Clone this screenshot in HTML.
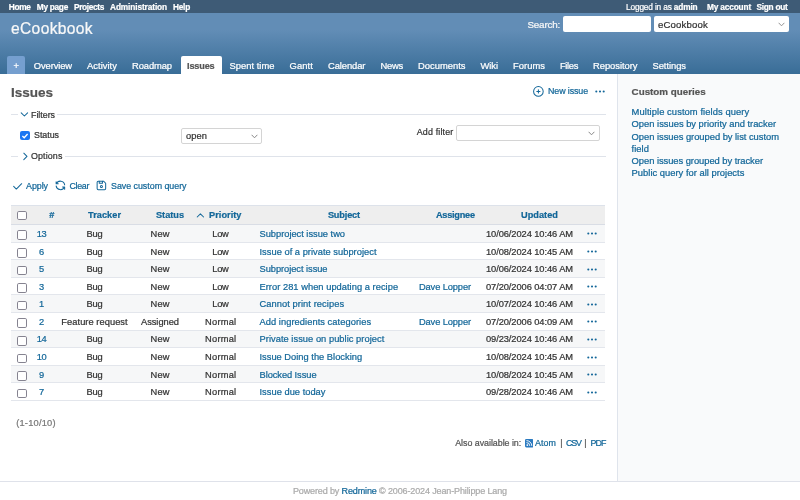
<!DOCTYPE html>
<html><head><meta charset="utf-8"><title>Issues - eCookbook - Redmine</title>
<style>
html,body{margin:0;padding:0;background:#fff;}
body{width:800px;height:500px;position:relative;overflow:hidden;font-family:"Liberation Sans",sans-serif;}
.t{position:absolute;white-space:nowrap;font-family:"Liberation Sans",sans-serif;-webkit-text-stroke:0.22px currentColor;}
b{font-weight:bold}
#w{position:absolute;left:0;top:0;width:800px;height:500px;will-change:transform;filter:blur(0.35px);}
</style></head><body>
<div id="w">
<div style="position:absolute;left:-10px;top:-10px;width:820px;height:23px;background:#3e5b76"></div>
<span class="t" style="left:8.75px;top:1px;font-size:8.3px;line-height:12px;font-weight:bold;color:#fff;letter-spacing:-0.328px;">Home</span>
<span class="t" style="left:36.75px;top:1px;font-size:8.3px;line-height:12px;font-weight:bold;color:#fff;letter-spacing:-0.279px;">My page</span>
<span class="t" style="left:74.00px;top:1px;font-size:8.3px;line-height:12px;font-weight:bold;color:#fff;letter-spacing:-0.344px;">Projects</span>
<span class="t" style="left:110.00px;top:1px;font-size:8.3px;line-height:12px;font-weight:bold;color:#fff;letter-spacing:-0.110px;">Administration</span>
<span class="t" style="left:173.00px;top:1px;font-size:8.3px;line-height:12px;font-weight:bold;color:#fff;letter-spacing:-0.246px;">Help</span>
<span class="t" style="left:626.00px;top:1px;font-size:8.3px;line-height:12px;font-weight:normal;color:#fff;letter-spacing:-0.154px;">Logged in as <b>admin</b></span>
<span class="t" style="left:707.00px;top:1px;font-size:8.3px;line-height:12px;font-weight:bold;color:#fff;letter-spacing:-0.166px;">My account</span>
<span class="t" style="left:756.50px;top:1px;font-size:8.3px;line-height:12px;font-weight:bold;color:#fff;letter-spacing:-0.273px;">Sign out</span>
<div style="position:absolute;left:-10px;top:13px;width:820px;height:61px;background:linear-gradient(#628db6 0%,#628db6 28%,#396d97 100%)"></div>
<span class="t" style="left:11.00px;top:19px;font-size:15.6px;line-height:19px;font-weight:normal;color:#f8f8f8;letter-spacing:0.345px;">eCookbook</span>
<span class="t" style="left:527.50px;top:18px;font-size:9.8px;line-height:13px;font-weight:normal;color:#f8f8f8;letter-spacing:-0.181px;">Search:</span>
<div style="position:absolute;left:562.5px;top:16px;width:88.5px;height:16px;background:#fff;border-radius:2px"></div>
<div style="position:absolute;left:653.5px;top:16px;width:135.5px;height:16px;background:#fff;border-radius:2px"></div>
<span class="t" style="left:658.00px;top:18px;font-size:9.6px;line-height:13px;font-weight:normal;color:#333;letter-spacing:0.161px;">eCookbook</span>
<svg style="position:absolute;left:778px;top:21.5px" width="7" height="5" viewBox="0 0 7 5"><path d="M0.6 0.8 L3.5 3.8 L6.4 0.8" fill="none" stroke="#888" stroke-width="0.9"/></svg>
<div style="position:absolute;left:7px;top:56px;width:18.4px;height:18px;background:#759fcf;border-radius:2px 2px 0 0"></div>
<span class="t" style="left:16.20px;transform:translateX(-50%);top:59px;font-size:9.4px;line-height:13px;font-weight:normal;color:#fff;">+</span>
<div style="position:absolute;left:180.5px;top:56px;width:41px;height:18px;background:#fff;border-radius:2px 2px 0 0"></div>
<span class="t" style="left:33.75px;top:59px;font-size:9.4px;line-height:13px;font-weight:normal;color:#fff;letter-spacing:-0.104px;">Overview</span>
<span class="t" style="left:87.00px;top:59px;font-size:9.4px;line-height:13px;font-weight:normal;color:#fff;letter-spacing:0.037px;">Activity</span>
<span class="t" style="left:132.00px;top:59px;font-size:9.4px;line-height:13px;font-weight:normal;color:#fff;letter-spacing:-0.094px;">Roadmap</span>
<span class="t" style="left:229.50px;top:59px;font-size:9.4px;line-height:13px;font-weight:normal;color:#fff;letter-spacing:0.017px;">Spent time</span>
<span class="t" style="left:289.50px;top:59px;font-size:9.4px;line-height:13px;font-weight:normal;color:#fff;letter-spacing:0.113px;">Gantt</span>
<span class="t" style="left:328.00px;top:59px;font-size:9.4px;line-height:13px;font-weight:normal;color:#fff;letter-spacing:-0.093px;">Calendar</span>
<span class="t" style="left:380.50px;top:59px;font-size:9.4px;line-height:13px;font-weight:normal;color:#fff;letter-spacing:-0.238px;">News</span>
<span class="t" style="left:418.00px;top:59px;font-size:9.4px;line-height:13px;font-weight:normal;color:#fff;letter-spacing:0.009px;">Documents</span>
<span class="t" style="left:480.50px;top:59px;font-size:9.4px;line-height:13px;font-weight:normal;color:#fff;letter-spacing:-0.051px;">Wiki</span>
<span class="t" style="left:513.00px;top:59px;font-size:9.4px;line-height:13px;font-weight:normal;color:#fff;letter-spacing:0.036px;">Forums</span>
<span class="t" style="left:560.00px;top:59px;font-size:9.4px;line-height:13px;font-weight:normal;color:#fff;letter-spacing:-0.359px;">Files</span>
<span class="t" style="left:593.00px;top:59px;font-size:9.4px;line-height:13px;font-weight:normal;color:#fff;letter-spacing:-0.031px;">Repository</span>
<span class="t" style="left:652.50px;top:59px;font-size:9.4px;line-height:13px;font-weight:normal;color:#fff;letter-spacing:-0.047px;">Settings</span>
<span class="t" style="left:187.00px;top:60px;font-size:9.1px;line-height:12px;font-weight:bold;color:#555;letter-spacing:-0.135px;">Issues</span>
<div style="position:absolute;left:617px;top:74px;width:193px;height:407.5px;background:#f9fafb;border-left:1px solid #dfe4ec;box-sizing:border-box"></div>
<span class="t" style="left:631.60px;top:85px;font-size:9.8px;line-height:13px;font-weight:bold;color:#555;letter-spacing:-0.003px;">Custom queries</span>
<span class="t" style="left:631.60px;top:105px;font-size:9.4px;line-height:13px;font-weight:normal;color:#136799;letter-spacing:0.068px;">Multiple custom fields query</span>
<span class="t" style="left:631.60px;top:117px;font-size:9.4px;line-height:13px;font-weight:normal;color:#136799;letter-spacing:-0.013px;">Open issues by priority and tracker</span>
<span class="t" style="left:631.60px;top:130px;font-size:9.4px;line-height:13px;font-weight:normal;color:#136799;letter-spacing:-0.033px;">Open issues grouped by list custom</span>
<span class="t" style="left:631.60px;top:142px;font-size:9.4px;line-height:13px;font-weight:normal;color:#136799;letter-spacing:0.019px;">field</span>
<span class="t" style="left:631.60px;top:154px;font-size:9.4px;line-height:13px;font-weight:normal;color:#136799;letter-spacing:-0.050px;">Open issues grouped by tracker</span>
<span class="t" style="left:631.60px;top:166px;font-size:9.4px;line-height:13px;font-weight:normal;color:#136799;letter-spacing:0.008px;">Public query for all projects</span>
<span class="t" style="left:11.00px;top:84px;font-size:13.5px;line-height:17px;font-weight:bold;color:#555;letter-spacing:-0.005px;">Issues</span>
<svg style="position:absolute;left:532.30px;top:84.60px" width="12.8" height="12.8" viewBox="0 0 24 24" fill="none" stroke="#136799" stroke-width="1.9" stroke-linecap="round" stroke-linejoin="round"><path d="M3 12a9 9 0 1 0 18 0a9 9 0 0 0 -18 0"/><path d="M9 12h6"/><path d="M12 9v6"/></svg>
<span class="t" style="left:548.00px;top:85px;font-size:8.9px;line-height:12px;font-weight:normal;color:#136799;letter-spacing:-0.106px;">New issue</span>
<svg style="position:absolute;left:595.30px;top:89.50px" width="10" height="3" viewBox="0 0 10 3"><circle cx="1.3" cy="1.5" r="1.05" fill="#136799"/><circle cx="5" cy="1.5" r="1.05" fill="#136799"/><circle cx="8.7" cy="1.5" r="1.05" fill="#136799"/></svg>
<div style="position:absolute;left:11px;top:114px;width:6.5px;height:1px;background:#dfe3ea"></div>
<div style="position:absolute;left:57px;top:114px;width:549px;height:1px;background:#dfe3ea"></div>
<svg style="position:absolute;left:18.30px;top:108.20px" width="12.8" height="12.8" viewBox="0 0 24 24" fill="none" stroke="#136799" stroke-width="1.9" stroke-linecap="round" stroke-linejoin="round"><path d="M6 9l6 6l6 -6"/></svg>
<span class="t" style="left:31.00px;top:109px;font-size:8.9px;line-height:12px;font-weight:normal;color:#333;letter-spacing:-0.025px;">Filters</span>
<div style="position:absolute;left:19.8px;top:130.8px;width:10px;height:9.7px;background:#1a76f2;border-radius:2px"></div>
<svg style="position:absolute;left:19.8px;top:130.8px" width="10" height="9.7" viewBox="0 0 10 9.7"><path d="M2.4 5 L4.2 6.8 L7.6 3" fill="none" stroke="#fff" stroke-width="1.3"/></svg>
<span class="t" style="left:34.00px;top:129px;font-size:8.9px;line-height:12px;font-weight:normal;color:#333;letter-spacing:-0.029px;">Status</span>
<div style="position:absolute;left:180.5px;top:127.5px;width:81.5px;height:16px;background:#fff;border:1px solid #d4d4d4;border-radius:2px;box-sizing:border-box"></div>
<span class="t" style="left:186.00px;top:130px;font-size:9.3px;line-height:12px;font-weight:normal;color:#333;letter-spacing:0.078px;">open</span>
<svg style="position:absolute;left:250.5px;top:133.6px" width="7" height="5" viewBox="0 0 7 5"><path d="M0.6 0.8 L3.5 3.8 L6.4 0.8" fill="none" stroke="#888" stroke-width="1"/></svg>
<span class="t" style="left:416.75px;top:126px;font-size:8.9px;line-height:12px;font-weight:normal;color:#333;letter-spacing:0.172px;">Add filter</span>
<div style="position:absolute;left:456px;top:124.5px;width:143.5px;height:16px;background:#fff;border:1px solid #d4d4d4;border-radius:2px;box-sizing:border-box"></div>
<svg style="position:absolute;left:587.7px;top:130.6px" width="7" height="5" viewBox="0 0 7 5"><path d="M0.6 0.8 L3.5 3.8 L6.4 0.8" fill="none" stroke="#888" stroke-width="1"/></svg>
<div style="position:absolute;left:11px;top:155.5px;width:6.5px;height:1px;background:#dfe3ea"></div>
<div style="position:absolute;left:64.5px;top:155.5px;width:541.5px;height:1px;background:#dfe3ea"></div>
<svg style="position:absolute;left:18.50px;top:149.70px" width="12.8" height="12.8" viewBox="0 0 24 24" fill="none" stroke="#136799" stroke-width="1.9" stroke-linecap="round" stroke-linejoin="round"><path d="M9 6l6 6l-6 6"/></svg>
<span class="t" style="left:31.00px;top:150px;font-size:8.9px;line-height:12px;font-weight:normal;color:#333;letter-spacing:0.129px;">Options</span>
<svg style="position:absolute;left:10.73px;top:179.50px" width="12.8" height="12.8" viewBox="0 0 24 24" fill="none" stroke="#136799" stroke-width="1.9" stroke-linecap="round" stroke-linejoin="round"><path d="M5 12l5 5l10 -10"/></svg>
<span class="t" style="left:26.00px;top:180px;font-size:8.9px;line-height:12px;font-weight:normal;color:#136799;letter-spacing:-0.041px;">Apply</span>
<svg style="position:absolute;left:53.90px;top:179.35px" width="12.8" height="12.8" viewBox="0 0 24 24" fill="none" stroke="#136799" stroke-width="1.9" stroke-linecap="round" stroke-linejoin="round"><path d="M20 11a8.1 8.1 0 0 0 -15.5 -2m-.5 -4v4h4"/><path d="M4 13a8.1 8.1 0 0 0 15.5 2m.5 4v-4h-4"/></svg>
<span class="t" style="left:69.50px;top:180px;font-size:8.9px;line-height:12px;font-weight:normal;color:#136799;letter-spacing:-0.344px;">Clear</span>
<svg style="position:absolute;left:95.20px;top:179.40px" width="12.8" height="12.8" viewBox="0 0 24 24" fill="none" stroke="#136799" stroke-width="1.9" stroke-linecap="round" stroke-linejoin="round"><path d="M6 4h10l4 4v10a2 2 0 0 1 -2 2h-12a2 2 0 0 1 -2 -2v-12a2 2 0 0 1 2 -2"/><path d="M12 14m-2 0a2 2 0 1 0 4 0a2 2 0 1 0 -4 0"/><path d="M14 4l0 4l-6 0l0 -4"/></svg>
<span class="t" style="left:111.00px;top:180px;font-size:8.9px;line-height:12px;font-weight:normal;color:#136799;letter-spacing:-0.028px;">Save custom query</span>
<div style="position:absolute;left:11px;top:204.5px;width:594px;height:20.5px;background:#eee;border-bottom:1px solid #d9dde5;border-top:1px solid #dde2ea;box-sizing:border-box"></div>
<div style="position:absolute;left:17px;top:210.8px;width:9.5px;height:9.5px;background:#fff;border:1px solid #858390;border-radius:1.8px;box-sizing:border-box"></div>
<span class="t" style="left:51.75px;transform:translateX(-50%);top:209px;font-size:9.2px;line-height:12px;font-weight:bold;color:#136799;">#</span>
<span class="t" style="left:104.52px;transform:translateX(-50%);top:209px;font-size:9.2px;line-height:12px;font-weight:bold;color:#136799;letter-spacing:0.042px;">Tracker</span>
<span class="t" style="left:169.99px;transform:translateX(-50%);top:209px;font-size:9.2px;line-height:12px;font-weight:bold;color:#136799;letter-spacing:-0.016px;">Status</span>
<svg style="position:absolute;left:193.60px;top:208.80px" width="12.8" height="12.8" viewBox="0 0 24 24" fill="none" stroke="#136799" stroke-width="1.9" stroke-linecap="round" stroke-linejoin="round"><path d="M6 15l6 -6l6 6"/></svg>
<span class="t" style="left:209.00px;top:209px;font-size:9.2px;line-height:12px;font-weight:bold;color:#136799;letter-spacing:0.041px;">Priority</span>
<span class="t" style="left:343.92px;transform:translateX(-50%);top:209px;font-size:9.2px;line-height:12px;font-weight:bold;color:#136799;letter-spacing:-0.170px;">Subject</span>
<span class="t" style="left:455.38px;transform:translateX(-50%);top:209px;font-size:9.2px;line-height:12px;font-weight:bold;color:#136799;letter-spacing:-0.232px;">Assignee</span>
<span class="t" style="left:539.52px;transform:translateX(-50%);top:209px;font-size:9.2px;line-height:12px;font-weight:bold;color:#136799;letter-spacing:0.036px;">Updated</span>
<div style="position:absolute;left:11px;top:225px;width:594px;height:18px;background:#f6f7f8;border-bottom:1px solid #e3e6ec;box-sizing:border-box"></div>
<div style="position:absolute;left:17px;top:230.4px;width:9.5px;height:9.5px;background:#fff;border:1px solid #858390;border-radius:1.8px;box-sizing:border-box"></div>
<span class="t" style="left:41.49px;transform:translateX(-50%);top:228px;font-size:9.3px;line-height:12px;font-weight:normal;color:#136799;letter-spacing:-0.422px;">13</span>
<span class="t" style="left:94.41px;transform:translateX(-50%);top:228px;font-size:9.3px;line-height:12px;font-weight:normal;color:#333;letter-spacing:-0.182px;">Bug</span>
<span class="t" style="left:160.07px;transform:translateX(-50%);top:228px;font-size:9.3px;line-height:12px;font-weight:normal;color:#333;letter-spacing:0.130px;">New</span>
<span class="t" style="left:220.46px;transform:translateX(-50%);top:228px;font-size:9.3px;line-height:12px;font-weight:normal;color:#333;letter-spacing:-0.288px;">Low</span>
<span class="t" style="left:259.50px;top:228px;font-size:9.3px;line-height:12px;font-weight:normal;color:#136799;letter-spacing:-0.015px;">Subproject issue two</span>
<span class="t" style="left:529.46px;transform:translateX(-50%);top:228px;font-size:9.3px;line-height:12px;font-weight:normal;color:#333;letter-spacing:-0.074px;">10/06/2024 10:46 AM</span>
<svg style="position:absolute;left:587.40px;top:232.40px" width="10" height="3" viewBox="0 0 10 3"><circle cx="1.3" cy="1.5" r="1.05" fill="#136799"/><circle cx="5" cy="1.5" r="1.05" fill="#136799"/><circle cx="8.7" cy="1.5" r="1.05" fill="#136799"/></svg>
<div style="position:absolute;left:11px;top:243px;width:594px;height:17px;background:#fff;border-bottom:1px solid #e3e6ec;box-sizing:border-box"></div>
<div style="position:absolute;left:17px;top:248.0px;width:9.5px;height:9.5px;background:#fff;border:1px solid #858390;border-radius:1.8px;box-sizing:border-box"></div>
<span class="t" style="left:41.70px;transform:translateX(-50%);top:246px;font-size:9.3px;line-height:12px;font-weight:normal;color:#136799;">6</span>
<span class="t" style="left:94.41px;transform:translateX(-50%);top:246px;font-size:9.3px;line-height:12px;font-weight:normal;color:#333;letter-spacing:-0.182px;">Bug</span>
<span class="t" style="left:160.07px;transform:translateX(-50%);top:246px;font-size:9.3px;line-height:12px;font-weight:normal;color:#333;letter-spacing:0.130px;">New</span>
<span class="t" style="left:220.46px;transform:translateX(-50%);top:246px;font-size:9.3px;line-height:12px;font-weight:normal;color:#333;letter-spacing:-0.288px;">Low</span>
<span class="t" style="left:259.50px;top:246px;font-size:9.3px;line-height:12px;font-weight:normal;color:#136799;letter-spacing:0.025px;">Issue of a private subproject</span>
<span class="t" style="left:529.46px;transform:translateX(-50%);top:246px;font-size:9.3px;line-height:12px;font-weight:normal;color:#333;letter-spacing:-0.074px;">10/08/2024 10:45 AM</span>
<svg style="position:absolute;left:587.40px;top:250.00px" width="10" height="3" viewBox="0 0 10 3"><circle cx="1.3" cy="1.5" r="1.05" fill="#136799"/><circle cx="5" cy="1.5" r="1.05" fill="#136799"/><circle cx="8.7" cy="1.5" r="1.05" fill="#136799"/></svg>
<div style="position:absolute;left:11px;top:260px;width:594px;height:18px;background:#f6f7f8;border-bottom:1px solid #e3e6ec;box-sizing:border-box"></div>
<div style="position:absolute;left:17px;top:265.6px;width:9.5px;height:9.5px;background:#fff;border:1px solid #858390;border-radius:1.8px;box-sizing:border-box"></div>
<span class="t" style="left:41.70px;transform:translateX(-50%);top:263px;font-size:9.3px;line-height:12px;font-weight:normal;color:#136799;">5</span>
<span class="t" style="left:94.41px;transform:translateX(-50%);top:263px;font-size:9.3px;line-height:12px;font-weight:normal;color:#333;letter-spacing:-0.182px;">Bug</span>
<span class="t" style="left:160.07px;transform:translateX(-50%);top:263px;font-size:9.3px;line-height:12px;font-weight:normal;color:#333;letter-spacing:0.130px;">New</span>
<span class="t" style="left:220.46px;transform:translateX(-50%);top:263px;font-size:9.3px;line-height:12px;font-weight:normal;color:#333;letter-spacing:-0.288px;">Low</span>
<span class="t" style="left:259.50px;top:263px;font-size:9.3px;line-height:12px;font-weight:normal;color:#136799;letter-spacing:-0.046px;">Subproject issue</span>
<span class="t" style="left:529.46px;transform:translateX(-50%);top:263px;font-size:9.3px;line-height:12px;font-weight:normal;color:#333;letter-spacing:-0.074px;">10/06/2024 10:46 AM</span>
<svg style="position:absolute;left:587.40px;top:267.60px" width="10" height="3" viewBox="0 0 10 3"><circle cx="1.3" cy="1.5" r="1.05" fill="#136799"/><circle cx="5" cy="1.5" r="1.05" fill="#136799"/><circle cx="8.7" cy="1.5" r="1.05" fill="#136799"/></svg>
<div style="position:absolute;left:11px;top:278px;width:594px;height:17px;background:#fff;border-bottom:1px solid #e3e6ec;box-sizing:border-box"></div>
<div style="position:absolute;left:17px;top:283.2px;width:9.5px;height:9.5px;background:#fff;border:1px solid #858390;border-radius:1.8px;box-sizing:border-box"></div>
<span class="t" style="left:41.70px;transform:translateX(-50%);top:281px;font-size:9.3px;line-height:12px;font-weight:normal;color:#136799;">3</span>
<span class="t" style="left:94.41px;transform:translateX(-50%);top:281px;font-size:9.3px;line-height:12px;font-weight:normal;color:#333;letter-spacing:-0.182px;">Bug</span>
<span class="t" style="left:160.07px;transform:translateX(-50%);top:281px;font-size:9.3px;line-height:12px;font-weight:normal;color:#333;letter-spacing:0.130px;">New</span>
<span class="t" style="left:220.46px;transform:translateX(-50%);top:281px;font-size:9.3px;line-height:12px;font-weight:normal;color:#333;letter-spacing:-0.288px;">Low</span>
<span class="t" style="left:259.50px;top:281px;font-size:9.3px;line-height:12px;font-weight:normal;color:#136799;letter-spacing:0.035px;">Error 281 when updating a recipe</span>
<span class="t" style="left:444.94px;transform:translateX(-50%);top:281px;font-size:9.3px;line-height:12px;font-weight:normal;color:#136799;letter-spacing:-0.114px;">Dave Lopper</span>
<span class="t" style="left:529.46px;transform:translateX(-50%);top:281px;font-size:9.3px;line-height:12px;font-weight:normal;color:#333;letter-spacing:-0.074px;">07/20/2006 04:07 AM</span>
<svg style="position:absolute;left:587.40px;top:285.20px" width="10" height="3" viewBox="0 0 10 3"><circle cx="1.3" cy="1.5" r="1.05" fill="#136799"/><circle cx="5" cy="1.5" r="1.05" fill="#136799"/><circle cx="8.7" cy="1.5" r="1.05" fill="#136799"/></svg>
<div style="position:absolute;left:11px;top:295px;width:594px;height:18px;background:#f6f7f8;border-bottom:1px solid #e3e6ec;box-sizing:border-box"></div>
<div style="position:absolute;left:17px;top:300.8px;width:9.5px;height:9.5px;background:#fff;border:1px solid #858390;border-radius:1.8px;box-sizing:border-box"></div>
<span class="t" style="left:41.70px;transform:translateX(-50%);top:298px;font-size:9.3px;line-height:12px;font-weight:normal;color:#136799;">1</span>
<span class="t" style="left:94.41px;transform:translateX(-50%);top:298px;font-size:9.3px;line-height:12px;font-weight:normal;color:#333;letter-spacing:-0.182px;">Bug</span>
<span class="t" style="left:160.07px;transform:translateX(-50%);top:298px;font-size:9.3px;line-height:12px;font-weight:normal;color:#333;letter-spacing:0.130px;">New</span>
<span class="t" style="left:220.46px;transform:translateX(-50%);top:298px;font-size:9.3px;line-height:12px;font-weight:normal;color:#333;letter-spacing:-0.288px;">Low</span>
<span class="t" style="left:259.50px;top:298px;font-size:9.3px;line-height:12px;font-weight:normal;color:#136799;letter-spacing:0.070px;">Cannot print recipes</span>
<span class="t" style="left:529.46px;transform:translateX(-50%);top:298px;font-size:9.3px;line-height:12px;font-weight:normal;color:#333;letter-spacing:-0.074px;">10/07/2024 10:46 AM</span>
<svg style="position:absolute;left:587.40px;top:302.80px" width="10" height="3" viewBox="0 0 10 3"><circle cx="1.3" cy="1.5" r="1.05" fill="#136799"/><circle cx="5" cy="1.5" r="1.05" fill="#136799"/><circle cx="8.7" cy="1.5" r="1.05" fill="#136799"/></svg>
<div style="position:absolute;left:11px;top:313px;width:594px;height:18px;background:#fff;border-bottom:1px solid #e3e6ec;box-sizing:border-box"></div>
<div style="position:absolute;left:17px;top:318.4px;width:9.5px;height:9.5px;background:#fff;border:1px solid #858390;border-radius:1.8px;box-sizing:border-box"></div>
<span class="t" style="left:41.70px;transform:translateX(-50%);top:316px;font-size:9.3px;line-height:12px;font-weight:normal;color:#136799;">2</span>
<span class="t" style="left:94.52px;transform:translateX(-50%);top:316px;font-size:9.3px;line-height:12px;font-weight:normal;color:#333;letter-spacing:0.044px;">Feature request</span>
<span class="t" style="left:159.98px;transform:translateX(-50%);top:316px;font-size:9.3px;line-height:12px;font-weight:normal;color:#333;letter-spacing:-0.031px;">Assigned</span>
<span class="t" style="left:220.70px;transform:translateX(-50%);top:316px;font-size:9.3px;line-height:12px;font-weight:normal;color:#333;letter-spacing:0.205px;">Normal</span>
<span class="t" style="left:259.50px;top:316px;font-size:9.3px;line-height:12px;font-weight:normal;color:#136799;letter-spacing:0.058px;">Add ingredients categories</span>
<span class="t" style="left:444.94px;transform:translateX(-50%);top:316px;font-size:9.3px;line-height:12px;font-weight:normal;color:#136799;letter-spacing:-0.114px;">Dave Lopper</span>
<span class="t" style="left:529.46px;transform:translateX(-50%);top:316px;font-size:9.3px;line-height:12px;font-weight:normal;color:#333;letter-spacing:-0.074px;">07/20/2006 04:09 AM</span>
<svg style="position:absolute;left:587.40px;top:320.40px" width="10" height="3" viewBox="0 0 10 3"><circle cx="1.3" cy="1.5" r="1.05" fill="#136799"/><circle cx="5" cy="1.5" r="1.05" fill="#136799"/><circle cx="8.7" cy="1.5" r="1.05" fill="#136799"/></svg>
<div style="position:absolute;left:11px;top:331px;width:594px;height:17px;background:#f6f7f8;border-bottom:1px solid #e3e6ec;box-sizing:border-box"></div>
<div style="position:absolute;left:17px;top:336.0px;width:9.5px;height:9.5px;background:#fff;border:1px solid #858390;border-radius:1.8px;box-sizing:border-box"></div>
<span class="t" style="left:41.49px;transform:translateX(-50%);top:333px;font-size:9.3px;line-height:12px;font-weight:normal;color:#136799;letter-spacing:-0.422px;">14</span>
<span class="t" style="left:94.41px;transform:translateX(-50%);top:333px;font-size:9.3px;line-height:12px;font-weight:normal;color:#333;letter-spacing:-0.182px;">Bug</span>
<span class="t" style="left:160.07px;transform:translateX(-50%);top:333px;font-size:9.3px;line-height:12px;font-weight:normal;color:#333;letter-spacing:0.130px;">New</span>
<span class="t" style="left:220.70px;transform:translateX(-50%);top:333px;font-size:9.3px;line-height:12px;font-weight:normal;color:#333;letter-spacing:0.205px;">Normal</span>
<span class="t" style="left:259.50px;top:333px;font-size:9.3px;line-height:12px;font-weight:normal;color:#136799;letter-spacing:0.041px;">Private issue on public project</span>
<span class="t" style="left:529.46px;transform:translateX(-50%);top:333px;font-size:9.3px;line-height:12px;font-weight:normal;color:#333;letter-spacing:-0.074px;">09/23/2024 10:46 AM</span>
<svg style="position:absolute;left:587.40px;top:338.00px" width="10" height="3" viewBox="0 0 10 3"><circle cx="1.3" cy="1.5" r="1.05" fill="#136799"/><circle cx="5" cy="1.5" r="1.05" fill="#136799"/><circle cx="8.7" cy="1.5" r="1.05" fill="#136799"/></svg>
<div style="position:absolute;left:11px;top:348px;width:594px;height:18px;background:#fff;border-bottom:1px solid #e3e6ec;box-sizing:border-box"></div>
<div style="position:absolute;left:17px;top:353.6px;width:9.5px;height:9.5px;background:#fff;border:1px solid #858390;border-radius:1.8px;box-sizing:border-box"></div>
<span class="t" style="left:41.49px;transform:translateX(-50%);top:351px;font-size:9.3px;line-height:12px;font-weight:normal;color:#136799;letter-spacing:-0.422px;">10</span>
<span class="t" style="left:94.41px;transform:translateX(-50%);top:351px;font-size:9.3px;line-height:12px;font-weight:normal;color:#333;letter-spacing:-0.182px;">Bug</span>
<span class="t" style="left:160.07px;transform:translateX(-50%);top:351px;font-size:9.3px;line-height:12px;font-weight:normal;color:#333;letter-spacing:0.130px;">New</span>
<span class="t" style="left:220.70px;transform:translateX(-50%);top:351px;font-size:9.3px;line-height:12px;font-weight:normal;color:#333;letter-spacing:0.205px;">Normal</span>
<span class="t" style="left:259.50px;top:351px;font-size:9.3px;line-height:12px;font-weight:normal;color:#136799;letter-spacing:0.011px;">Issue Doing the Blocking</span>
<span class="t" style="left:529.46px;transform:translateX(-50%);top:351px;font-size:9.3px;line-height:12px;font-weight:normal;color:#333;letter-spacing:-0.074px;">10/08/2024 10:45 AM</span>
<svg style="position:absolute;left:587.40px;top:355.60px" width="10" height="3" viewBox="0 0 10 3"><circle cx="1.3" cy="1.5" r="1.05" fill="#136799"/><circle cx="5" cy="1.5" r="1.05" fill="#136799"/><circle cx="8.7" cy="1.5" r="1.05" fill="#136799"/></svg>
<div style="position:absolute;left:11px;top:366px;width:594px;height:17px;background:#f6f7f8;border-bottom:1px solid #e3e6ec;box-sizing:border-box"></div>
<div style="position:absolute;left:17px;top:371.2px;width:9.5px;height:9.5px;background:#fff;border:1px solid #858390;border-radius:1.8px;box-sizing:border-box"></div>
<span class="t" style="left:41.70px;transform:translateX(-50%);top:369px;font-size:9.3px;line-height:12px;font-weight:normal;color:#136799;">9</span>
<span class="t" style="left:94.41px;transform:translateX(-50%);top:369px;font-size:9.3px;line-height:12px;font-weight:normal;color:#333;letter-spacing:-0.182px;">Bug</span>
<span class="t" style="left:160.07px;transform:translateX(-50%);top:369px;font-size:9.3px;line-height:12px;font-weight:normal;color:#333;letter-spacing:0.130px;">New</span>
<span class="t" style="left:220.70px;transform:translateX(-50%);top:369px;font-size:9.3px;line-height:12px;font-weight:normal;color:#333;letter-spacing:0.205px;">Normal</span>
<span class="t" style="left:259.50px;top:369px;font-size:9.3px;line-height:12px;font-weight:normal;color:#136799;letter-spacing:-0.069px;">Blocked Issue</span>
<span class="t" style="left:529.46px;transform:translateX(-50%);top:369px;font-size:9.3px;line-height:12px;font-weight:normal;color:#333;letter-spacing:-0.074px;">10/08/2024 10:45 AM</span>
<svg style="position:absolute;left:587.40px;top:373.20px" width="10" height="3" viewBox="0 0 10 3"><circle cx="1.3" cy="1.5" r="1.05" fill="#136799"/><circle cx="5" cy="1.5" r="1.05" fill="#136799"/><circle cx="8.7" cy="1.5" r="1.05" fill="#136799"/></svg>
<div style="position:absolute;left:11px;top:383px;width:594px;height:18px;background:#fff;border-bottom:1px solid #e3e6ec;box-sizing:border-box"></div>
<div style="position:absolute;left:17px;top:388.8px;width:9.5px;height:9.5px;background:#fff;border:1px solid #858390;border-radius:1.8px;box-sizing:border-box"></div>
<span class="t" style="left:41.70px;transform:translateX(-50%);top:386px;font-size:9.3px;line-height:12px;font-weight:normal;color:#136799;">7</span>
<span class="t" style="left:94.41px;transform:translateX(-50%);top:386px;font-size:9.3px;line-height:12px;font-weight:normal;color:#333;letter-spacing:-0.182px;">Bug</span>
<span class="t" style="left:160.07px;transform:translateX(-50%);top:386px;font-size:9.3px;line-height:12px;font-weight:normal;color:#333;letter-spacing:0.130px;">New</span>
<span class="t" style="left:220.70px;transform:translateX(-50%);top:386px;font-size:9.3px;line-height:12px;font-weight:normal;color:#333;letter-spacing:0.205px;">Normal</span>
<span class="t" style="left:259.50px;top:386px;font-size:9.3px;line-height:12px;font-weight:normal;color:#136799;letter-spacing:0.023px;">Issue due today</span>
<span class="t" style="left:529.46px;transform:translateX(-50%);top:386px;font-size:9.3px;line-height:12px;font-weight:normal;color:#333;letter-spacing:-0.074px;">09/28/2024 10:46 AM</span>
<svg style="position:absolute;left:587.40px;top:390.80px" width="10" height="3" viewBox="0 0 10 3"><circle cx="1.3" cy="1.5" r="1.05" fill="#136799"/><circle cx="5" cy="1.5" r="1.05" fill="#136799"/><circle cx="8.7" cy="1.5" r="1.05" fill="#136799"/></svg>
<span class="t" style="left:16.20px;top:417px;font-size:9.3px;line-height:12px;font-weight:normal;color:#777;letter-spacing:0.207px;">(1-10/10)</span>
<span class="t" style="left:455.20px;top:437px;font-size:8.9px;line-height:12px;font-weight:normal;color:#555;letter-spacing:-0.034px;">Also available in:</span>
<svg style="position:absolute;left:524.5px;top:439.4px" width="8.4" height="8.4" viewBox="0 0 8.4 8.4"><rect width="8.4" height="8.4" rx="1.3" fill="#2a7ac0"/><circle cx="2.3" cy="6.1" r="0.9" fill="#fff"/><path d="M1.5 3.6 A3.3 3.3 0 0 1 4.8 6.9 M1.5 1.6 A5.3 5.3 0 0 1 6.8 6.9" fill="none" stroke="#fff" stroke-width="0.9"/></svg>
<span class="t" style="left:535.00px;top:437px;font-size:8.9px;line-height:12px;font-weight:normal;color:#136799;letter-spacing:0.070px;">Atom</span>
<span class="t" style="left:560.20px;top:437px;font-size:8.9px;line-height:12px;font-weight:normal;color:#555;">|</span>
<span class="t" style="left:566.00px;top:437px;font-size:8.9px;line-height:12px;font-weight:normal;color:#136799;letter-spacing:-1.217px;">CSV</span>
<span class="t" style="left:584.30px;top:437px;font-size:8.9px;line-height:12px;font-weight:normal;color:#555;">|</span>
<span class="t" style="left:590.50px;top:437px;font-size:8.9px;line-height:12px;font-weight:normal;color:#136799;letter-spacing:-0.917px;">PDF</span>
<div style="position:absolute;left:-10px;top:481px;width:820px;height:1px;background:#dfe2ea"></div>
<span class="t" style="left:399.94px;transform:translateX(-50%);top:485px;font-size:9.0px;line-height:12px;font-weight:normal;color:#aaa;letter-spacing:-0.129px;">Powered by <span style="color:#136799">Redmine</span> © 2006-2024 Jean-Philippe Lang</span>
</div>
</body></html>
